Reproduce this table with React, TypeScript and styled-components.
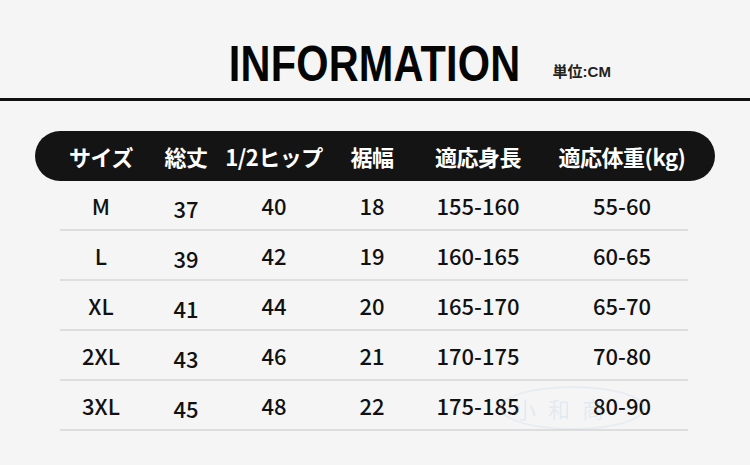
import React from 'react';
import styled, { createGlobalStyle } from 'styled-components';

const GlobalStyle = createGlobalStyle`
  html, body {
    margin: 0;
    padding: 0;
    background: #f5f5f5;
  }
  body {
    width: 750px;
    height: 465px;
    overflow: hidden;
    font-family: "Noto Sans CJK JP", "Noto Sans", sans-serif;
    color: #141414;
  }
`;

const COLUMNS = '82px 88px 88px 108px 104px 184px';

const Page = styled.div`
  width: 750px;
  height: 465px;
  position: relative;
  background: #f5f5f5;
`;

const TitleBar = styled.header`
  height: 98px;
  display: grid;
  grid-template-columns: 1fr auto 1fr;
  align-items: end;
  border-bottom: 3px solid #111;
  box-sizing: content-box;
`;

const Title = styled.h1`
  grid-column: 2;
  margin: 0 0 9px;
  font-family: "Liberation Sans", Arial, sans-serif;
  font-weight: 700;
  font-size: 50px;
  line-height: 50px;
  color: #050505;
  transform: scaleX(0.83);
  letter-spacing: 0.2px;
`;

/* title is scaled, so its layout box is ~29px wider than what shows */
const Unit = styled.span`
  grid-column: 3;
  justify-self: start;
  margin: 0 0 17px 2px;
  font-family: "Liberation Sans", "Noto Sans CJK JP", sans-serif;
  font-size: 15px;
  line-height: 18px;
  font-weight: 700;
  color: #222;
`;

const Table = styled.section`
  margin-top: 30px;
`;

const HeaderPill = styled.div`
  margin-left: 35px;
  width: 680px;
  height: 50px;
  box-sizing: border-box;
  padding-left: 25px;
  border-radius: 25px;
  background: #141414;
  display: grid;
  grid-template-columns: ${COLUMNS};
  align-items: center;
`;

const HeadCell = styled.div`
  justify-self: center;
  white-space: nowrap;
  color: #fff;
  font-weight: 700;
  font-size: 22px;
  line-height: 26px;
  letter-spacing: -0.5px;
`;

const Row = styled.div`
  margin-left: 60px;
  width: 628px;
  height: 50px;
  box-sizing: border-box;
  border-bottom: 2px solid #dedede;
  display: grid;
  grid-template-columns: ${COLUMNS};
  align-items: center;
`;

const Cell = styled.div<{ $drop?: boolean }>`
  justify-self: center;
  white-space: nowrap;
  font-weight: 500;
  font-size: 22px;
  line-height: 26px;
  padding-top: ${(p) => (p.$drop ? 6 : 0)}px;
  color: #111;
`;

const Watermark = styled.div`
  position: absolute;
  left: 500px;
  top: 386px;
  width: 145px;
  height: 44px;
  border: 2px solid rgba(170, 200, 230, 0.18);
  border-radius: 50%;
  display: flex;
  align-items: center;
  padding-left: 12px;
  box-sizing: border-box;
  gap: 12px;
  font-family: "Noto Sans CJK SC", serif;
  font-size: 22px;
  color: rgba(150, 185, 220, 0.2);
  pointer-events: none;
`;

const headers = ['サイズ', '総丈', '1/2ヒップ', '裾幅', '適応身長', '適応体重(kg)'];

const rows = [
  ['M', '37', '40', '18', '155-160', '55-60'],
  ['L', '39', '42', '19', '160-165', '60-65'],
  ['XL', '41', '44', '20', '165-170', '65-70'],
  ['2XL', '43', '46', '21', '170-175', '70-80'],
  ['3XL', '45', '48', '22', '175-185', '80-90'],
];

const App = () => {
  return (
    <Page>
      <GlobalStyle />
      <TitleBar>
        <Title>INFORMATION</Title>
        <Unit>単位:CM</Unit>
      </TitleBar>
      <Table>
        <HeaderPill>
          {headers.map((h) => (
            <HeadCell key={h}>{h}</HeadCell>
          ))}
        </HeaderPill>
        {rows.map((r) => (
          <Row key={r[0]}>
            {r.map((v, i) => (
              <Cell key={i} $drop={i === 1}>
                {v}
              </Cell>
            ))}
          </Row>
        ))}
      </Table>
      <Watermark>
        <span>小</span>
        <span>和</span>
        <span>商</span>
      </Watermark>
    </Page>
  );
};

export default App;
